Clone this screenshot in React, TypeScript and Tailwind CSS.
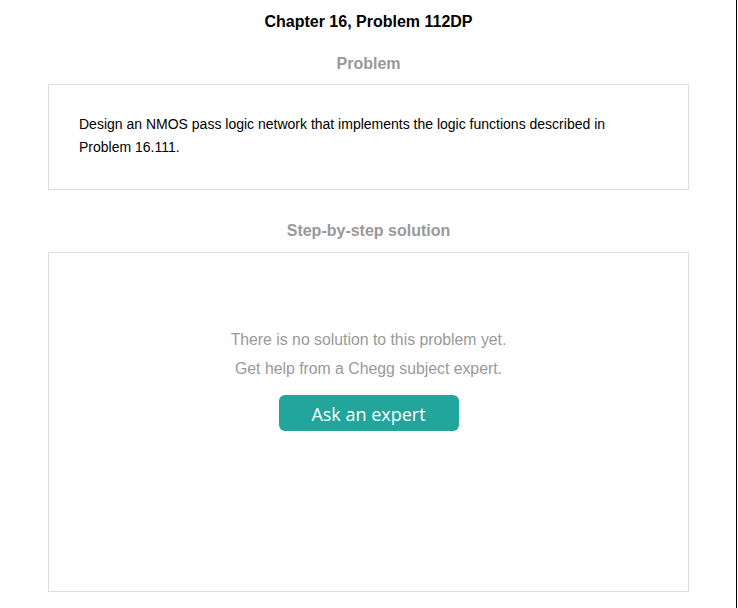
export default function App() {
  return (
    <div className="w-[738px] h-[608px] bg-white flex" style={{ fontFamily: '"Liberation Sans", Arial, sans-serif' }}>
      <div className="w-[737px] h-full border-r border-black pl-[48px]">
        <div className="w-[641px] flex flex-col">
          <div className="mt-[12px] h-[20px] leading-[20px] text-center text-[16px] font-bold text-black">
            Chapter 16, Problem 112DP
          </div>
          <div className="mt-[22px] h-[20px] leading-[20px] text-center text-[16px] font-bold text-[#999999]">
            Problem
          </div>
          <div className="mt-[10px] h-[106px] border border-[#dddddd] pl-[30px] pr-[28px] pt-[28px] text-[14px] leading-[23px] text-black">
            Design an NMOS pass logic network that implements the logic functions described in Problem 16.111.
          </div>
          <div className="mt-[31px] h-[20px] leading-[20px] text-center text-[16px] font-bold text-[#999999]">
            Step-by-step solution
          </div>
          <div className="mt-[11px] h-[340px] border border-[#dddddd] flex flex-col items-center pt-[72px]">
            <div className="text-[15.8px] leading-[29px] text-[#999999] text-center">
              <p>There is no solution to this problem yet.</p>
              <p>Get help from a Chegg subject expert.</p>
            </div>
            <button
              className="mt-[12px] w-[180px] h-[36px] rounded-[6px] bg-[#22a59b] text-white text-[18px] leading-[38px]"
              style={{ fontFamily: '"Open Sans", "DejaVu Sans", sans-serif' }}
            >
              Ask an expert
            </button>
          </div>
        </div>
      </div>
    </div>
  );
}
